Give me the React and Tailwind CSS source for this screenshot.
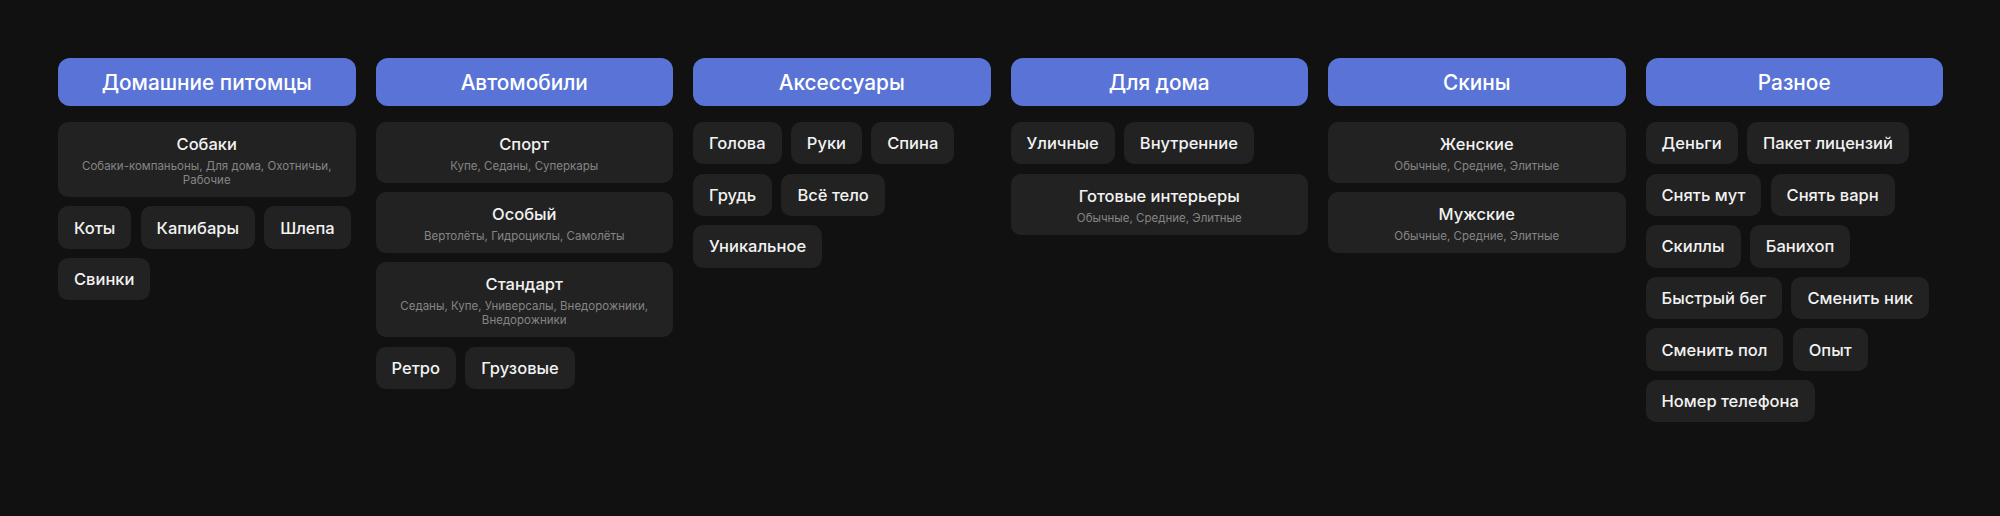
const columns = [
  {
    title: "Домашние питомцы",
    items: [
      { name: "Собаки", sub: "Собаки-компаньоны, Для дома, Охотничьи, Рабочие" },
      { name: "Коты" },
      { name: "Капибары" },
      { name: "Шлепа" },
      { name: "Свинки" },
    ],
  },
  {
    title: "Автомобили",
    items: [
      { name: "Спорт", sub: "Купе, Седаны, Суперкары" },
      { name: "Особый", sub: "Вертолёты, Гидроциклы, Самолёты" },
      { name: "Стандарт", sub: "Седаны, Купе, Универсалы, Внедорожники, Внедорожники" },
      { name: "Ретро" },
      { name: "Грузовые" },
    ],
  },
  {
    title: "Аксессуары",
    items: [
      { name: "Голова" },
      { name: "Руки" },
      { name: "Спина" },
      { name: "Грудь" },
      { name: "Всё тело" },
      { name: "Уникальное" },
    ],
  },
  {
    title: "Для дома",
    items: [
      { name: "Уличные" },
      { name: "Внутренние" },
      { name: "Готовые интерьеры", sub: "Обычные, Средние, Элитные" },
    ],
  },
  {
    title: "Скины",
    items: [
      { name: "Женские", sub: "Обычные, Средние, Элитные" },
      { name: "Мужские", sub: "Обычные, Средние, Элитные" },
    ],
  },
  {
    title: "Разное",
    items: [
      { name: "Деньги" },
      { name: "Пакет лицензий" },
      { name: "Снять мут" },
      { name: "Снять варн" },
      { name: "Скиллы" },
      { name: "Банихоп" },
      { name: "Быстрый бег" },
      { name: "Сменить ник" },
      { name: "Сменить пол" },
      { name: "Опыт" },
      { name: "Номер телефона" },
    ],
  },
];

function Item({ name, sub }) {
  if (sub) {
    return (
      <div className="w-full rounded-[10px] bg-[#222222] px-4 pt-[12px] pb-[10px] text-center">
        <div className="text-[16.5px] leading-[20px] font-[550] text-[#f2f2f2]">{name}</div>
        <div className="mt-[5px] text-[11.5px] leading-[14px] text-[#858585]">{sub}</div>
      </div>
    );
  }
  return (
    <div className="flex h-[42.4px] items-center rounded-[10px] bg-[#222222] px-4 pt-px text-[16.5px] font-[550] text-[#f2f2f2]">
      {name}
    </div>
  );
}

export default function App() {
  return (
    <div className="h-[516px] bg-[#111111] font-['Inter',sans-serif]">
      <div className="grid grid-cols-6 gap-5 pt-[58px] pr-[57px] pl-[58px]">
        {columns.map((col) => (
          <div key={col.title} className="min-w-0">
            <div className="flex h-[48px] items-center justify-center rounded-xl bg-[#5974d6] pt-px text-[20.8px] font-[550] text-white">
              {col.title}
            </div>
            <div className="mt-4 flex flex-wrap gap-[9.2px]">
              {col.items.map((item) => (
                <Item key={item.name} {...item} />
              ))}
            </div>
          </div>
        ))}
      </div>
    </div>
  );
}
